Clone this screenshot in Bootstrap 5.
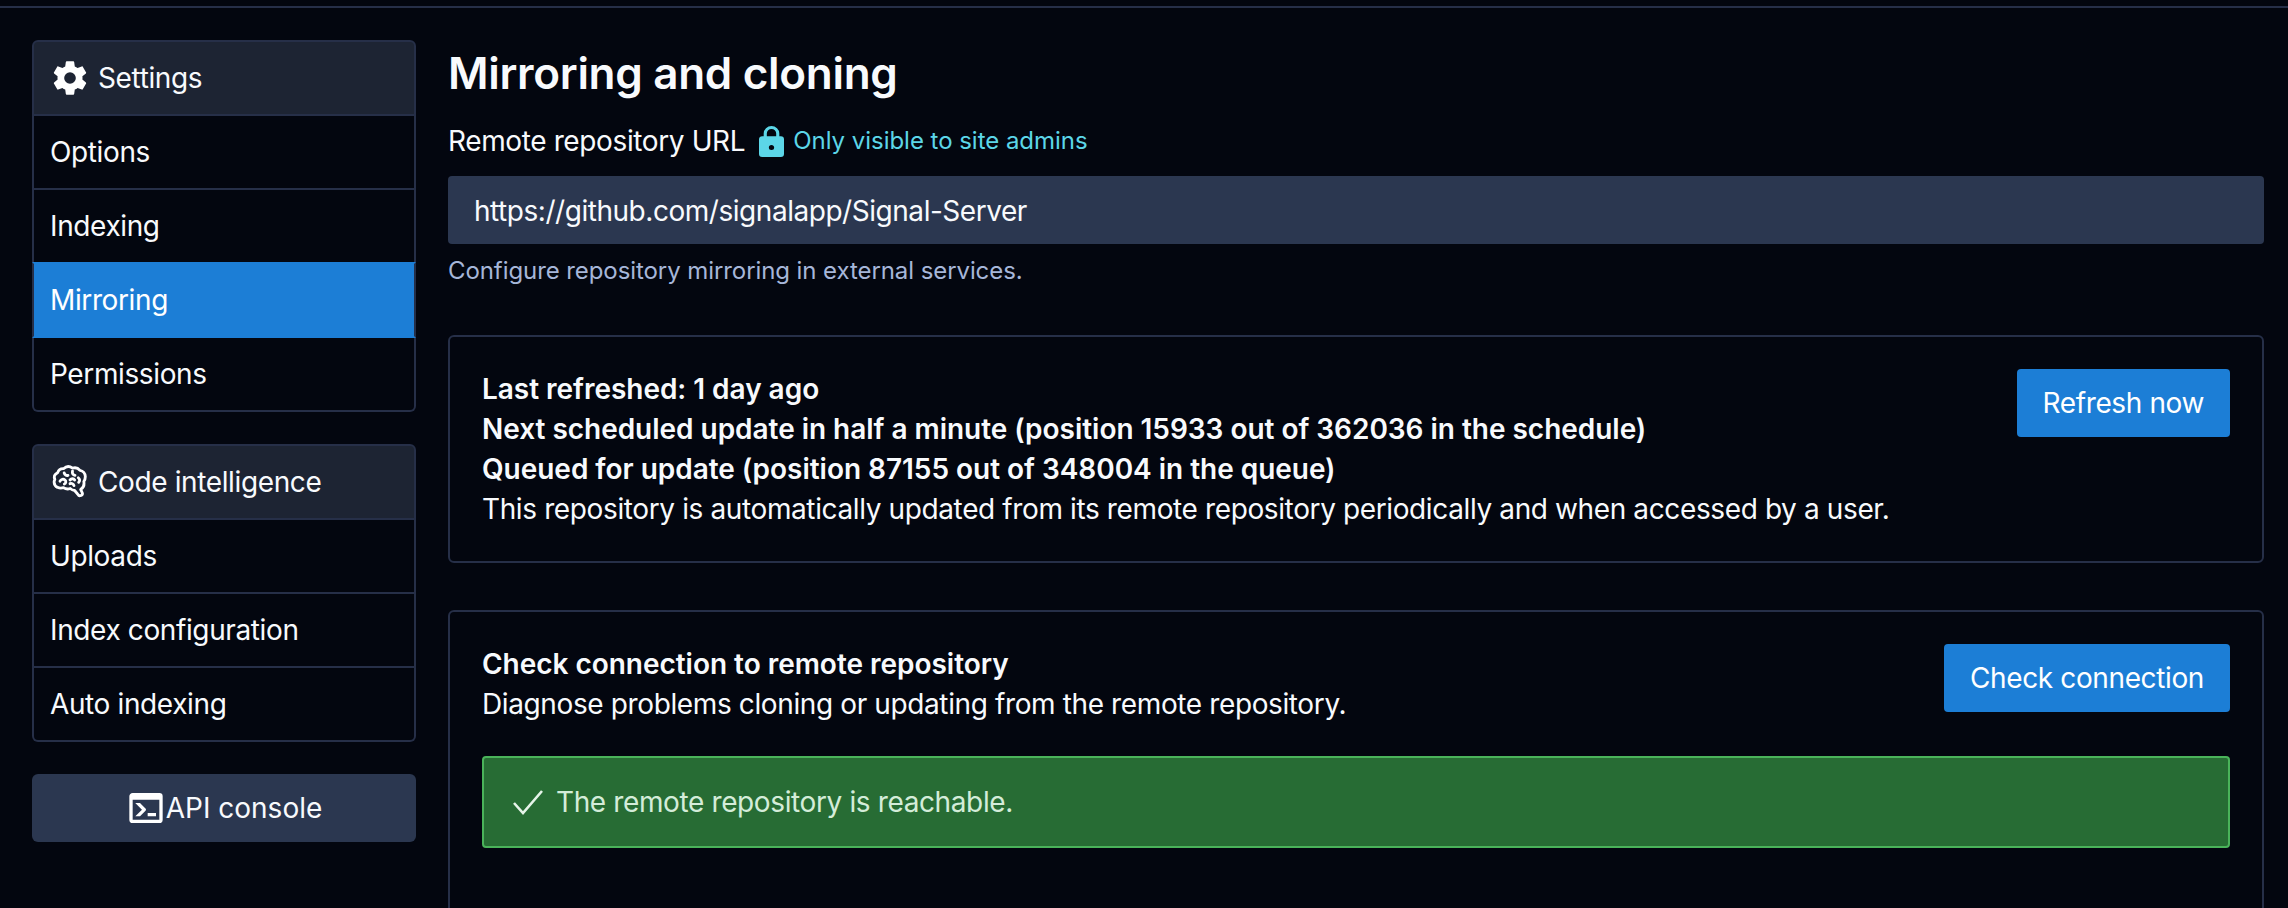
<!DOCTYPE html>
<html lang="en">
<head>
    <meta charset="UTF-8">
    <title>Mirroring and cloning</title>
    <link href="https://cdn.jsdelivr.net/npm/bootstrap@5.3.0/dist/css/bootstrap.min.css" rel="stylesheet">
    <style>
        body {
            font-family: Inter, "Liberation Sans", sans-serif;
            font-size: 28px;
            line-height: 40px;
            letter-spacing: -0.38px;
            background: #03060f;
            color: #f8fafd;
            height: 908px;
            overflow: hidden;
        }

        /* Top rule */
        .top-rule { height: 8px; border-bottom: 2px solid #262f48; }

        /* Page layout */
        .page-wrap { padding: 32px 24px 0 32px; gap: 32px; }
        .side-col { width: 384px; flex: none; gap: 32px; }
        .main-col { min-width: 0; }

        /* Sidebar */
        .side-box {
            --bs-list-group-bg: #03060f;
            --bs-list-group-color: #f8fafd;
            --bs-list-group-border-color: #262f48;
            --bs-list-group-border-width: 2px;
            --bs-list-group-border-radius: 6px;
            --bs-list-group-item-padding-x: 16px;
            --bs-list-group-item-padding-y: 16px;
            --bs-list-group-active-bg: #1c7ed6;
            --bs-list-group-active-border-color: #1c7ed6;
            --bs-list-group-active-color: #fff;
            --bs-list-group-action-hover-bg: #03060f;
            --bs-list-group-action-hover-color: #f8fafd;
            --bs-list-group-action-active-bg: #03060f;
            --bs-list-group-action-active-color: #f8fafd;
        }
        .side-head { background: #1d2433 !important; gap: 8px; }
        .side-head svg { margin-top: -1px; }
        .side-box .list-group-item.active { border-left-color: #262f48; border-right-color: #262f48; }

        .console-btn {
            background: #2b3750;
            border: 0;
            border-radius: 6px;
            color: #f8fafd;
            font-size: 28px;
            line-height: 40px;
            padding: 14px;
        }

        /* Main column */
        .page-title { font-size: 44px; line-height: 52px; font-weight: 600; margin: 7px 0 22px; letter-spacing: -0.3px; }
        .url-label { gap: 14px; margin-bottom: 15px; }
        .admin-note { color: #5cd6e8; font-size: 24px; gap: 9px; letter-spacing: -0.03px; }
        .url-input, .url-input:disabled {
            background: #2b3750;
            border: 0;
            border-radius: 4px;
            color: #f8fafd;
            font-size: 28px;
            line-height: 40px;
            letter-spacing: -0.46px;
            padding: 15px 26px 13px;
        }
        .help-line { color: #a6b6d9; font-size: 24px; line-height: 34px; margin: 10px 0 47px; letter-spacing: -0.08px; }

        .panel-box {
            background: transparent;
            border: 2px solid #262f48;
            border-radius: 6px;
            color: #f8fafd;
            margin-bottom: 47px;
        }
        .panel-tall { min-height: 420px; }
        .panel-box .card-body { padding: 32px; }
        .strong-line { font-weight: 600; letter-spacing: -0.03px; }
        .act-btn {
            --bs-btn-bg: #1c7ed6;
            --bs-btn-border-color: #1c7ed6;
            --bs-btn-color: #fff;
            font-size: 28px;
            line-height: 40px;
            letter-spacing: -0.38px;
            padding: 14px 26px;
            border: 0;
            border-radius: 4px;
            white-space: nowrap;
        }
        .ok-alert {
            background: #276c34;
            border: 2px solid #4ab35a;
            border-radius: 4px;
            color: #d4ecd9;
            margin: 32px 0 0;
            padding: 24px 30px;
            gap: 12px;
        }
        .ok-alert svg { margin-left: -2px; }
    </style>
</head>
<body>

<div class="top-rule"></div>

<div class="d-flex page-wrap">
    <!-- Sidebar -->
    <div class="d-flex flex-column side-col">
        <div class="list-group side-box">
            <div class="list-group-item d-flex align-items-center side-head">
                <svg width="40" height="40" viewBox="0 0 24 24" fill="#fff"><path d="M12,15.5A3.5,3.5 0 0,1 8.5,12A3.5,3.5 0 0,1 12,8.5A3.5,3.5 0 0,1 15.5,12A3.5,3.5 0 0,1 12,15.5M19.43,12.97C19.47,12.65 19.5,12.33 19.5,12C19.5,11.67 19.47,11.34 19.43,11L21.54,9.37C21.73,9.22 21.78,8.95 21.66,8.73L19.66,5.27C19.54,5.05 19.27,4.96 19.05,5.05L16.56,6.05C16.04,5.66 15.5,5.32 14.87,5.07L14.5,2.42C14.46,2.18 14.25,2 14,2H10C9.75,2 9.54,2.18 9.5,2.42L9.13,5.07C8.5,5.32 7.96,5.66 7.44,6.05L4.95,5.05C4.73,4.96 4.46,5.05 4.34,5.27L2.34,8.73C2.21,8.95 2.27,9.22 2.46,9.37L4.57,11C4.53,11.34 4.5,11.67 4.5,12C4.5,12.33 4.53,12.65 4.57,12.97L2.46,14.63C2.27,14.78 2.21,15.05 2.34,15.27L4.34,18.73C4.46,18.95 4.73,19.03 4.95,18.95L7.44,17.94C7.96,18.34 8.5,18.68 9.13,18.93L9.5,21.58C9.54,21.82 9.75,22 10,22H14C14.25,22 14.46,21.82 14.5,21.58L14.87,18.93C15.5,18.67 16.04,18.34 16.56,17.94L19.05,18.95C19.27,19.03 19.54,18.95 19.66,18.73L21.66,15.27C21.78,15.05 21.73,14.78 21.54,14.63L19.43,12.97Z"/></svg>
                <span>Settings</span>
            </div>
            <a href="#" class="list-group-item list-group-item-action">Options</a>
            <a href="#" class="list-group-item list-group-item-action">Indexing</a>
            <a href="#" class="list-group-item list-group-item-action active">Mirroring</a>
            <a href="#" class="list-group-item list-group-item-action">Permissions</a>
        </div>

        <div class="list-group side-box">
            <div class="list-group-item d-flex align-items-center side-head">
                <svg width="40" height="40" viewBox="0 0 24 24" fill="none" stroke="#fff" stroke-width="1.7" stroke-linecap="round" stroke-linejoin="round">
                    <path d="M20.4,12.9C20.5,14.3 19.7,15.6 18.4,16.4L19.4,18.6C19.6,19.2 19.2,19.8 18.7,20L18,20.2C17.6,20.3 17.3,20.1 17.1,19.9L14.8,17.1C13.9,17 12.9,16.6 12.1,15.9C10.8,16.4 9.3,16.2 8.1,15.4C6.8,15.8 5.6,15.7 4.5,15.2C3.3,14.7 2.6,13.6 2.5,12.4C2.4,11.7 2.6,11 2.9,10.4C2.5,9.6 2.5,8.9 2.7,8.2C3.1,7.4 3.8,6.8 4.6,6.4C5.1,4.9 6.4,3.9 8.1,4C9.7,2.5 11.8,2.4 13.5,3.7C15.2,3.1 16.9,3.7 18,5C19.8,5.3 21.1,6.9 21.2,8.7C21.2,9.8 20.9,10.8 20.3,11.7C20.4,12.1 20.4,12.5 20.4,12.9Z"/>
                    <path d="M8.5,6.5C8.8,7.8 9.8,8.3 10.8,8M13.5,5.5C13.2,6.8 13.8,7.8 15,8M6,11.5C6.6,10.3 8,10 9,10.8C9.8,11.5 9.6,12.8 8.6,13.2M12,10.8C12.8,9.8 14.2,9.8 14.8,10.8M17,9.5C18,10.2 18,11.5 17.2,12.2M12,13C13,12.6 14,13 14.4,14.2"/>
                </svg>
                <span>Code intelligence</span>
            </div>
            <a href="#" class="list-group-item list-group-item-action">Uploads</a>
            <a href="#" class="list-group-item list-group-item-action">Index configuration</a>
            <a href="#" class="list-group-item list-group-item-action">Auto indexing</a>
        </div>

        <button class="console-btn d-flex align-items-center justify-content-center">
            <svg width="40" height="40" viewBox="0 0 24 24" fill="#fff"><path d="M20,19V7H4V19H20M20,3A2,2 0 0,1 22,5V19A2,2 0 0,1 20,21H4A2,2 0 0,1 2,19V5C2,3.89 2.9,3 4,3H20M13,17V15H18V17H13M9.58,13L5.57,9H8.4L11.7,12.3C12.09,12.69 12.09,13.33 11.7,13.72L8.42,17H5.59L9.58,13Z"/></svg>
            <span>API console</span>
        </button>
    </div>

    <!-- Main content -->
    <div class="flex-grow-1 main-col">
        <h1 class="page-title">Mirroring and cloning</h1>

        <div class="d-flex align-items-center url-label">
            <span>Remote repository URL</span>
            <span class="d-flex align-items-center admin-note">
                <svg width="25" height="31" viewBox="4 1 16 21" preserveAspectRatio="none" fill="#5cd6e8"><path d="M12,17.2A1.7,1.7 0 0,0 13.7,15.5C13.7,14.6 12.9,13.8 12,13.8A1.7,1.7 0 0,0 10.3,15.5A1.7,1.7 0 0,0 12,17.2M18,8A2,2 0 0,1 20,10V20A2,2 0 0,1 18,22H6A2,2 0 0,1 4,20V10C4,8.89 4.9,8 6,8H7V6A5,5 0 0,1 12,1A5,5 0 0,1 17,6V8H18M12,3A3,3 0 0,0 9,6V8H15V6A3,3 0 0,0 12,3Z"/></svg>
                <span>Only visible to site admins</span>
            </span>
        </div>

        <input class="form-control url-input" type="text" value="https://github.com/signalapp/Signal-Server" disabled>
        <div class="help-line">Configure repository mirroring in external services.</div>

        <div class="card panel-box">
            <div class="card-body d-flex justify-content-between align-items-start">
                <div>
                    <div class="strong-line">Last refreshed: 1 day ago</div>
                    <div class="strong-line">Next scheduled update in half a minute (position 15933 out of 362036 in the schedule)</div>
                    <div class="strong-line">Queued for update (position 87155 out of 348004 in the queue)</div>
                    <div>This repository is automatically updated from its remote repository periodically and when accessed by a user.</div>
                </div>
                <button class="btn act-btn">Refresh now</button>
            </div>
        </div>

        <div class="card panel-box panel-tall">
            <div class="card-body">
                <div class="d-flex justify-content-between align-items-start">
                    <div>
                        <div class="strong-line">Check connection to remote repository</div>
                        <div>Diagnose problems cloning or updating from the remote repository.</div>
                    </div>
                    <button class="btn act-btn">Check connection</button>
                </div>
                <div class="alert d-flex align-items-center ok-alert" role="alert">
                    <svg width="32" height="32" viewBox="0 0 32 32" fill="none" stroke="#e6f4e9" stroke-width="2.6"><path d="M2,17L11,27L30,5"/></svg>
                    <span>The remote repository is reachable.</span>
                </div>
            </div>
        </div>
    </div>
</div>

<script src="https://cdn.jsdelivr.net/npm/bootstrap@5.3.0/dist/js/bootstrap.bundle.min.js"></script>
</body>
</html>
